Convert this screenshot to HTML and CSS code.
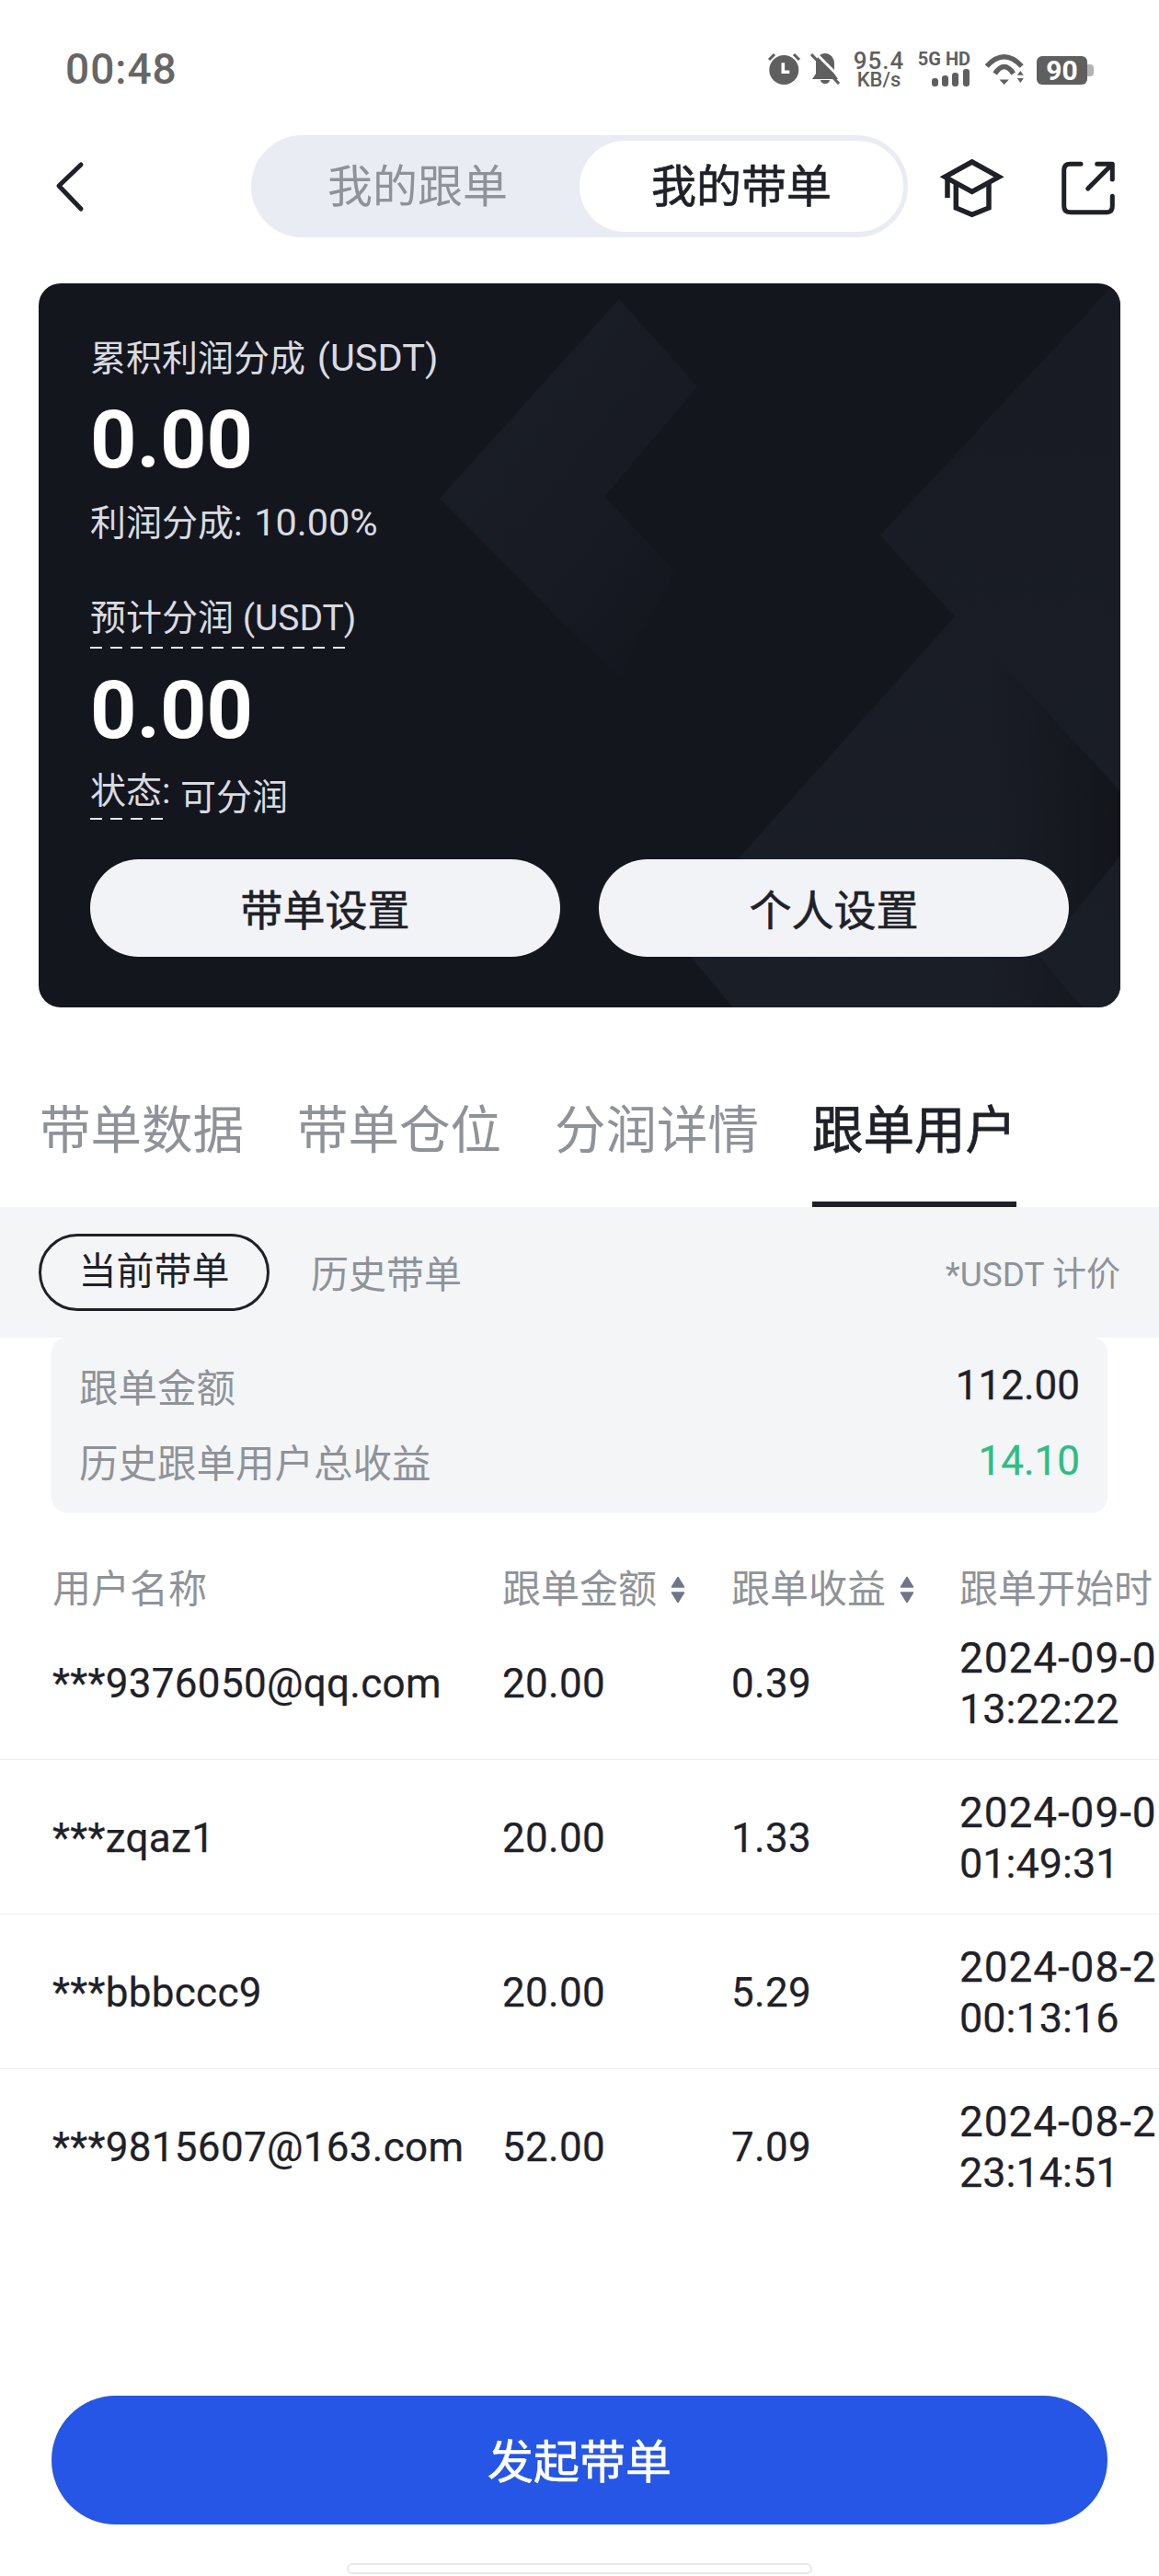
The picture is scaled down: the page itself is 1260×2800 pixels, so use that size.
FILE: index.html
```html
<!DOCTYPE html>
<html lang="zh-CN">
<head>
    <meta charset="UTF-8">
    <title>我的带单</title>
    <link rel="stylesheet" href="styles.css">
</head>
<body>
<div class="page">
    <div class="status">
        <span class="time">00:48</span>
        <div class="status-icons">
            <svg class="ic-alarm" width="37" height="40" viewBox="0 0 37 40">
                <circle cx="18.3" cy="21" r="16" fill="#5f5f5f"/>
                <path d="M17.3 13.3v10h7" fill="none" stroke="#fff" stroke-width="3.6"/>
                <path d="M2 10l6-6M35 10l-6-6" fill="none" stroke="#5f5f5f" stroke-width="3"/>
            </svg>
            <svg class="ic-bell" width="34" height="40" viewBox="0 0 34 40">
                <path d="M17 3c6 0 10 5 10 11v11l4 6H3l4-6V14C7 8 11 3 17 3z" fill="#5f5f5f"/>
                <path d="M12 32h10a5 4 0 0 1-10 0z" fill="#5f5f5f"/>
                <path d="M5 1l30 30" stroke="#fff" stroke-width="3"/>
                <path d="M2 4l30 32" stroke="#5f5f5f" stroke-width="3"/>
            </svg>
            <div class="speed">
                <span class="speed-num">95.4</span>
                <span class="speed-unit">KB/s</span>
            </div>
            <div class="net">
                <span class="net-label">5G HD</span>
                <svg width="42" height="19" viewBox="0 0 42 19">
                    <rect x="0" y="10" width="7" height="9" rx="3" fill="#5f5f5f"/>
                    <rect x="11" y="7" width="7" height="12" rx="3" fill="#5f5f5f"/>
                    <rect x="22" y="4" width="7" height="15" rx="3" fill="#5f5f5f"/>
                    <rect x="34" y="0" width="7" height="19" rx="3" fill="#5f5f5f"/>
                </svg>
            </div>
            <svg class="ic-wifi" width="46" height="35" viewBox="0 0 46 35">
                <path d="M3.7 14Q22.7 -6.4 41.7 14M12.7 22Q22.700 7 32.700 22" fill="none" stroke="#5f5f5f" stroke-width="5.500"/>
                <path d="M17.500 28.500h10.400l-5.200 5.500zM40.300 19l-3.500 4.700h7zM36.800 27h7l-3.500 5z" fill="#5f5f5f"/>
            </svg>
            <div class="battery">90</div>
        </div>
    </div>

    <div class="topbar">
        <svg class="back" width="32" height="56" viewBox="0 0 32 56">
            <path d="M28 4L4 27l24 25" fill="none" stroke="#1f2128" stroke-width="5" stroke-linecap="round" stroke-linejoin="round"/>
        </svg>
        <div class="switch">
            <span class="switch-item">我的跟单</span>
            <span class="switch-item switch-on">我的带单</span>
        </div>
        <svg class="tb-icon cap" width="80" height="70" viewBox="0 0 80 70">
            <path d="M36.700 6L66 22.300 36.700 38.300 7.300 22.300z" fill="none" stroke="#1f2128" stroke-width="5.500"/>
            <path d="M19.300 30v26l17.400 7.300L55 56V30M10 25v20" fill="none" stroke="#1f2128" stroke-width="5.500"/>
        </svg>
        <svg class="tb-icon share" width="70" height="70" viewBox="0 0 70 70">
            <path d="M25 8.300H13.300Q6.700 8.300 6.700 15v39q0 6.700 6.600 6.700h40q6 0 6-6.700V43.300M32.700 35L59.300 8.300M42.700 8.300h16.600V25" fill="none" stroke="#1f2128" stroke-width="5" stroke-linecap="round" stroke-linejoin="round"/>
        </svg>
    </div>

    <div class="card">
        <svg class="card-bg" width="1176" height="787" viewBox="0 0 1176 787">
            <defs>
                <linearGradient id="fade1" x1="0.2" y1="0.3" x2="0.8" y2="1">
                    <stop offset="0" stop-color="#191d26"/>
                    <stop offset="0.5" stop-color="#181b24"/>
                    <stop offset="1" stop-color="#14161e"/>
                </linearGradient>
                <linearGradient id="fade2" x1="0" y1="0" x2="1" y2="0">
                    <stop offset="0.35" stop-color="#14161d" stop-opacity="0"/>
                    <stop offset="1" stop-color="#13151b"/>
                </linearGradient>
                <linearGradient id="fade3" x1="0" y1="0" x2="0" y2="1">
                    <stop offset="0" stop-color="#181b23"/>
                    <stop offset="1" stop-color="#1a1e27"/>
                </linearGradient>
            </defs>
            <path d="M631 17L716 112 615 232 691 312 631 429 436 234z" fill="url(#fade1)"/>
            <path d="M1170 0H1176V787H755L688 707 996 362 915 274z" fill="url(#fade3)"/>
            <path d="M1028 392L1176 552V622L1088 732 1135 787H950V540z" fill="url(#fade2)"/>
        </svg>
        <div class="card-body">
            <div class="label">累积利润分成 <span class="en">(USDT)</span></div>
            <div class="amount">0.00</div>
            <div class="sub">利润分成: <span class="en">10.00%</span></div>
            <div class="label label-next"><span class="dashed">预计分润 (USDT)</span></div>
            <div class="amount amount-next">0.00</div>
            <div class="sub-state">
                <span class="dashed dashed-short">状态:</span>
                <span class="state-value">可分润</span>
            </div>
            <div class="card-actions">
                <button class="card-btn">带单设置</button>
                <button class="card-btn">个人设置</button>
            </div>
        </div>
    </div>

    <div class="tabs">
        <div class="tab">带单数据</div>
        <div class="tab">带单仓位</div>
        <div class="tab">分润详情</div>
        <div class="tab tab-on">跟单用户</div>
    </div>

    <div class="filter">
        <span class="chip chip-on">当前带单</span>
        <span class="chip chip-off">历史带单</span>
        <span class="filter-note">*USDT 计价</span>
    </div>

    <div class="summary">
        <div class="summary-row"><span>跟单金额</span><b>112.00</b></div>
        <div class="summary-row"><span>历史跟单用户总收益</span><b class="green">14.10</b></div>
    </div>

    <div class="table">
        <div class="row head">
            <span>用户名称</span>
            <span class="sort">跟单金额
                <svg width="16" height="30" viewBox="0 0 16 30"><path d="M8 1.500l6.500 10.500h-13zM1.500 18h13l-6.500 10.500z" fill="#70758a" stroke="#70758a" stroke-width="1.500" stroke-linejoin="round"/></svg>
            </span>
            <span class="sort">跟单收益
                <svg width="16" height="30" viewBox="0 0 16 30"><path d="M8 1.500l6.500 10.500h-13zM1.500 18h13l-6.500 10.500z" fill="#70758a" stroke="#70758a" stroke-width="1.500" stroke-linejoin="round"/></svg>
            </span>
            <span>跟单开始时</span>
        </div>
        <div class="row">
            <span>***9376050@qq.com</span><span>20.00</span><span>0.39</span>
            <span class="date"><span class="day">2024-09-0</span><span class="clock">13:22:22</span></span>
        </div>
        <div class="row">
            <span>***zqaz1</span><span>20.00</span><span>1.33</span>
            <span class="date"><span class="day">2024-09-0</span><span class="clock">01:49:31</span></span>
        </div>
        <div class="row">
            <span>***bbbccc9</span><span>20.00</span><span>5.29</span>
            <span class="date"><span class="day">2024-08-2</span><span class="clock">00:13:16</span></span>
        </div>
        <div class="row row-last">
            <span>***9815607@163.com</span><span>52.00</span><span>7.09</span>
            <span class="date"><span class="day">2024-08-2</span><span class="clock">23:14:51</span></span>
        </div>
    </div>

    <button class="start-btn">发起带单</button>
    <div class="home-bar"></div>
</div>
</body>
</html>
```

FILE: styles.css
```css
* {
    margin: 0;
    padding: 0;
    box-sizing: border-box;
}

body {
    font-family: Roboto, "Noto Sans CJK SC", sans-serif;
    background: #fff;
    color: #1f2128;
}

.page {
    width: 1260px;
    height: 2800px;
    overflow: hidden;
}

/* status bar */
.status {
    height: 147px;
    padding: 51px 70px 0 71px;
    display: flex;
    justify-content: space-between;
    align-items: flex-start;
    color: #5f5f5f;
}

.time {
    font-size: 46px;
    line-height: 48px;
    font-weight: 500;
    letter-spacing: 1px;
    color: #666;
}

.status-icons {
    display: flex;
    align-items: flex-start;
    margin-top: 4px;
}

.ic-bell {
    margin-left: 9px;
}

.speed {
    margin-left: 13px;
    width: 57px;
    display: flex;
    flex-direction: column;
    align-items: center;
    font-weight: 500;
}

.speed-num {
    font-size: 26px;
    line-height: 23px;
    letter-spacing: 1px;
}

.speed-unit {
    font-size: 22px;
    line-height: 17px;
}

.net {
    margin-left: 13px;
    width: 58px;
    height: 40px;
    display: flex;
    flex-direction: column;
    align-items: flex-end;
}

.net-label {
    font-size: 20px;
    line-height: 19px;
    font-weight: 700;
    white-space: nowrap;
    margin-bottom: 1px;
}

.ic-wifi {
    margin-left: 14px;
    margin-top: 3px;
}

.battery {
    margin-left: 12px;
    margin-top: 6px;
    margin-right: 8px;
    width: 55px;
    height: 31px;
    border-radius: 6px;
    background: #5f5f5f;
    color: #fff;
    font-size: 30px;
    line-height: 31px;
    font-weight: 700;
    text-align: center;
    position: relative;
}

.battery::after {
    content: "";
    position: absolute;
    left: 55px;
    top: 9px;
    width: 7px;
    height: 13px;
    background: #b3b3b3;
    border-radius: 0 4px 4px 0;
}

/* top bar */
.topbar {
    height: 111px;
    padding-left: 60px;
    display: flex;
    align-items: flex-start;
}

.back {
    margin-top: 28px;
}

.switch {
    margin-left: 181px;
    width: 714px;
    height: 111px;
    padding: 6px 5px;
    border-radius: 56px;
    background: #e9ecf3;
    display: flex;
}

.switch-item {
    flex: 1;
    text-align: center;
    font-size: 49px;
    line-height: 101px;
    height: 99px;
    color: #8f9399;
    border-radius: 50px;
}

.switch-on {
    background: #fff;
    color: #1f2128;
    -webkit-text-stroke: 0.7px #1f2128;
}

.tb-icon {
    margin-top: 23px;
}

.cap {
    margin-left: 33px;
}

.share {
    margin-left: 50px;
}

/* dark card */
.card {
    position: relative;
    margin: 50px 42px 0;
    height: 787px;
    border-radius: 24px;
    background: #14161e;
    overflow: hidden;
}

.card-bg {
    position: absolute;
    left: 0;
    top: 0;
}

.card-body {
    position: relative;
    padding: 58px 56px 0;
    color: #d9dbe1;
}

.label,
.sub,
.sub-state {
    font-size: 39px;
    line-height: 46px;
}

.en {
    font-size: 41.500px;
    margin-left: 3px;
}

.amount {
    margin-top: 22px;
    font-size: 88px;
    line-height: 86px;
    font-weight: 700;
    color: #fff;
}

.sub {
    margin-top: 24px;
}

.label-next {
    margin-top: 57px;
    height: 56px;
}

.amount-next {
    margin-top: 24px;
}

.sub-state {
    margin-top: 22px;
    height: 54px;
    display: flex;
    align-items: flex-start;
    gap: 12px;
}

.state-value {
    margin-top: 7px;
}

.dashed {
    display: inline-block;
    width: 284px;
    height: 56px;
    white-space: nowrap;
    background: repeating-linear-gradient(90deg, #e6e7ea 0 13px, transparent 13px 22px) left bottom / 100% 2px no-repeat;
}

.dashed-short {
    width: 86px;
    height: 54px;
}

.card-actions {
    margin-top: 43px;
    display: flex;
    gap: 42px;
}

.card-btn {
    flex: 1;
    height: 106px;
    padding-bottom: 3px;
    border: none;
    border-radius: 53px;
    background: #f2f3f7;
    color: #1f2128;
    font-family: inherit;
    font-size: 46px;
    -webkit-text-stroke: 0.6px #1f2128;
}

/* tabs */
.tabs {
    height: 217px;
    padding: 97px 0 0 43px;
    display: flex;
    gap: 58px;
}

.tab {
    width: 222px;
    height: 120px;
    font-size: 55.500px;
    line-height: 76px;
    color: #8f9399;
    white-space: nowrap;
}

.tab-on {
    color: #1f2128;
    -webkit-text-stroke: 0.8px #1f2128;
    border-bottom: 6px solid #1f2128;
}

.filter {
    height: 142px;
    padding: 0 42px;
    background: #f4f5f7;
    display: flex;
    align-items: center;
    gap: 45px;
}

.chip {
    font-size: 41px;
    color: #8f9399;
}

.chip-off {
    margin-bottom: 2px;
}

.chip-on {
    width: 251px;
    height: 84px;
    line-height: 76px;
    text-align: center;
    border: 3px solid #1f2128;
    border-radius: 42px;
    color: #1f2128;
}

.filter-note {
    margin-left: auto;
    margin-bottom: 2px;
    font-size: 37px;
    color: #8f9399;
}

/* summary */
.summary {
    margin: 0 56px;
    height: 190px;
    padding: 21px 30px 0;
    border-radius: 16px;
    background: #f4f5f7;
    display: flex;
    flex-direction: column;
    gap: 22px;
}

.summary-row {
    height: 60px;
    display: flex;
    justify-content: space-between;
    align-items: center;
    font-size: 42.500px;
    color: #8f9399;
}

.summary-row b {
    margin-top: 2px;
    font-size: 44px;
    font-weight: 400;
    color: #1f2128;
    -webkit-text-stroke: 0.3px;
}

.summary-row b.green {
    color: #2fbd85;
}

/* table */
.table {
    font-size: 44px;
    letter-spacing: 0.3px;
    white-space: nowrap;
}

.row {
    height: 168px;
    padding: 2px 0 0 57px;
    display: grid;
    grid-template-columns: 489px 249px 248px 217px;
    align-items: center;
    border-bottom: 1px solid #eceef0;
    -webkit-text-stroke: 0.25px;
}

.row-last {
    border-bottom: none;
}

.head {
    height: 101px;
    padding-top: 67px;
    font-size: 42px;
    letter-spacing: 0;
    line-height: 34px;
    color: #8f9399;
    border-bottom: none;
    -webkit-text-stroke: 0;
}

.sort {
    display: flex;
    align-items: center;
    gap: 15px;
}

.date {
    line-height: 55px;
}

.day,
.clock {
    display: block;
}

.day {
    font-size: 46px;
    letter-spacing: 0.900px;
}

.clock {
    font-size: 45px;
    letter-spacing: 0;
}

/* bottom */
.start-btn {
    display: block;
    margin: 187px 56px 0;
    width: 1148px;
    height: 140px;
    padding-bottom: 5px;
    border: none;
    border-radius: 70px;
    background: #2556e5;
    color: #fff;
    font-family: inherit;
    font-size: 50px;
    -webkit-text-stroke: 0.6px #fff;
}

.home-bar {
    margin: 42px auto 0;
    width: 506px;
    height: 12px;
    border: 2px solid #e8e8e8;
    border-radius: 6px;
    background: #fff;
}
```
